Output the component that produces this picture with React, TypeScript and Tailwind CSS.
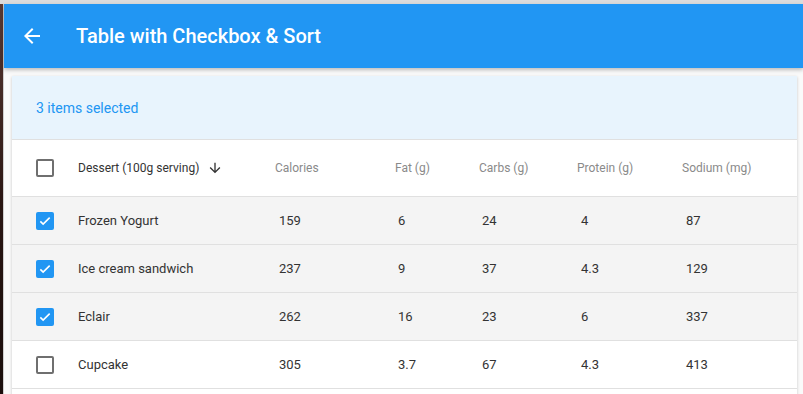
const rows = [
  { name: "Frozen Yogurt", calories: "159", fat: "6", carbs: "24", protein: "4", sodium: "87", checked: true },
  { name: "Ice cream sandwich", calories: "237", fat: "9", carbs: "37", protein: "4.3", sodium: "129", checked: true },
  { name: "Eclair", calories: "262", fat: "16", carbs: "23", protein: "6", sodium: "337", checked: true },
  { name: "Cupcake", calories: "305", fat: "3.7", carbs: "67", protein: "4.3", sodium: "413", checked: false },
];

const cols = "grid grid-cols-[66px_197px_120px_84px_98px_105px_115px] items-center";

function Checkbox({ checked }: { checked: boolean }) {
  if (checked) {
    return (
      <span className="flex h-[18px] w-[18px] items-center justify-center rounded-[2px] bg-[#2196F3]">
        <svg viewBox="0 0 24 24" className="h-[16px] w-[16px]" fill="none" stroke="white" strokeWidth="2.4">
          <path d="M5 12.5l4.2 4.2L19 7" />
        </svg>
      </span>
    );
  }
  return <span className="block h-[18px] w-[18px] rounded-[2px] border-2 border-[#6f6f6f]" />;
}

export default function App() {
  return (
    <div className="flex h-[394px] w-[803px] flex-col overflow-hidden bg-[#dcdcdc] font-['Roboto',sans-serif]">
      <div className="h-[4px] shrink-0" />
      <div className="flex min-h-0 flex-1">
        <div className="w-[3px] shrink-0 bg-gradient-to-b from-[#5a3a33] via-[#2b1714] to-[#1a0e0c]" />
        <div className="w-px shrink-0 bg-[#cfcfcf]" />
        <div className="flex min-w-0 flex-1 flex-col bg-[#fafafa]">
          <header className="relative z-10 flex h-[64px] shrink-0 items-center bg-[#2196F3] shadow-[0_2px_4px_rgba(0,0,0,0.25)]">
            <svg viewBox="0 0 24 24" className="ml-[16px] h-[24px] w-[24px]" fill="white">
              <path d="M20 11H7.83l5.59-5.59L12 4l-8 8 8 8 1.41-1.41L7.83 13H20v-2z" />
            </svg>
            <h1 className="ml-[32px] text-[20px] font-medium text-white">Table with Checkbox &amp; Sort</h1>
          </header>
          <div className="px-[8px] pt-[8px]">
            <div className="w-[785px] bg-white shadow-[0_1px_3px_rgba(0,0,0,0.2)]">
              <div className="flex h-[64px] items-center border-b border-[#e0e0e0] bg-[#e8f4fd] pl-[24px] pt-[2px] text-[14px] text-[#2196F3]">
                3 items selected
              </div>
              <div className={`${cols} h-[57px] border-b border-[#e0e0e0] text-[12px] text-[#8a8a8a]`}>
                <div className="pl-[24px]">
                  <Checkbox checked={false} />
                </div>
                <div className="flex items-center text-[#333]">
                  Dessert (100g serving)
                  <svg viewBox="0 0 24 24" className="ml-[8px] h-[16px] w-[16px]" fill="#333">
                    <path d="M20 12l-1.41-1.41L13 16.17V4h-2v12.17l-5.58-5.59L4 12l8 8 8-8z" />
                  </svg>
                </div>
                <div>Calories</div>
                <div>Fat (g)</div>
                <div>Carbs (g)</div>
                <div>Protein (g)</div>
                <div>Sodium (mg)</div>
              </div>
              {rows.map((r) => (
                <div
                  key={r.name}
                  className={`${cols} h-[48px] border-b border-[#e0e0e0] text-[13px] text-[#333] ${r.checked ? "bg-[#f4f4f4]" : "bg-white"}`}
                >
                  <div className="pl-[24px]">
                    <Checkbox checked={r.checked} />
                  </div>
                  <div>{r.name}</div>
                  <div className="pl-[4px]">{r.calories}</div>
                  <div className="pl-[3px]">{r.fat}</div>
                  <div className="pl-[3px]">{r.carbs}</div>
                  <div className="pl-[4px]">{r.protein}</div>
                  <div className="pl-[4px]">{r.sodium}</div>
                </div>
              ))}
              <div className="h-[48px]" />
            </div>
          </div>
        </div>
      </div>
    </div>
  );
}
